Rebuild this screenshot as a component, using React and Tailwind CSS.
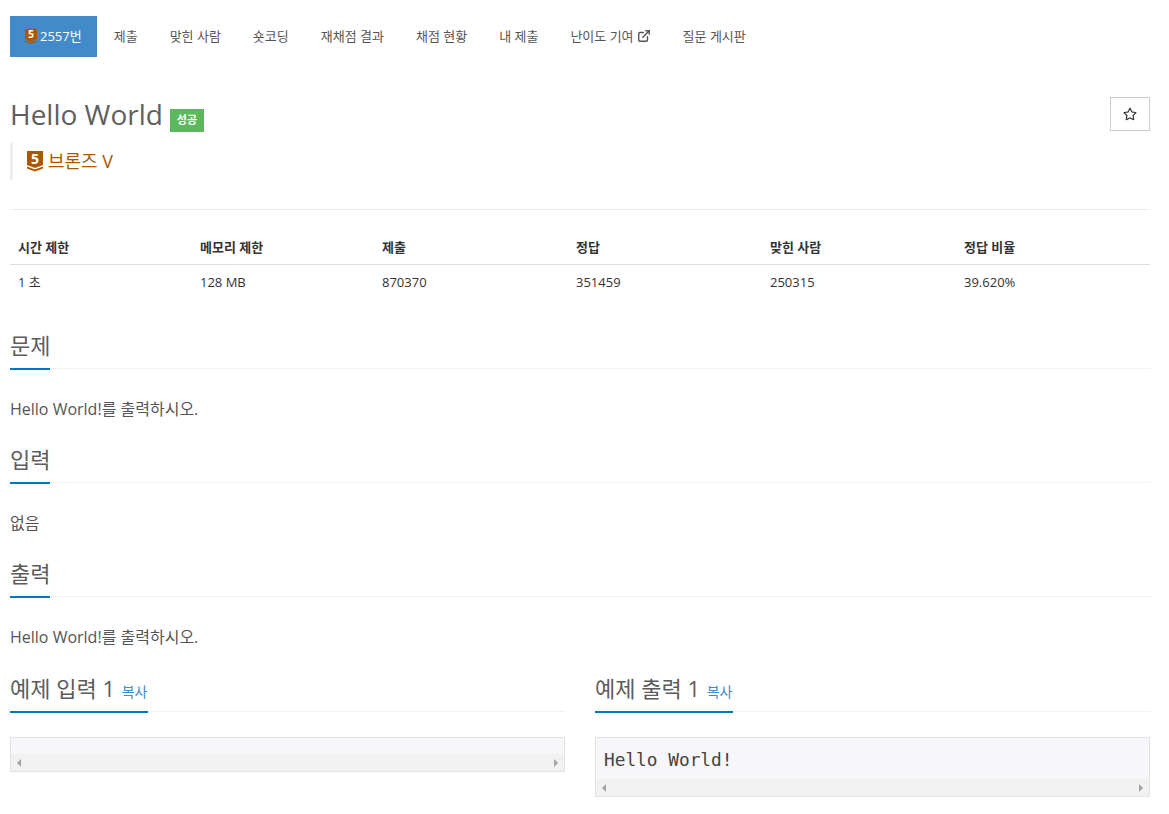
import React from 'react';
import { FaRegStar } from 'react-icons/fa';
import { ExternalLink } from 'lucide-react';

const navItems = ['제출', '맞힌 사람', '숏코딩', '재채점 결과', '채점 현황', '내 제출'];
const stats = [
  ['시간 제한', '1 초'],
  ['메모리 제한', '128 MB'],
  ['제출', '870370'],
  ['정답', '351459'],
  ['맞힌 사람', '250315'],
  ['정답 비율', '39.620%'],
];

function TierIcon({ className }) {
  return (
    <svg viewBox="0 0 16 21" className={`overflow-visible ${className}`}>
      <path d="M0 0H16V14L8 17L0 14Z" fill="#ad5600" />
      <path d="M0 15.5L8 18.5L16 15.5V17.5L8 20.5L0 17.5Z" fill="#ad5600" />
      <text x="8" y="12.5" textAnchor="middle" fontSize="14" fontWeight="700" fill="#fff" fontFamily="'Open Sans', sans-serif">5</text>
    </svg>
  );
}

function Headline({ children, underline = 'w-10' }) {
  return (
    <div className="relative border-b border-dotted border-[#e5e5e5] h-[37px]">
      <h2 className="text-[22px] leading-[26px] text-[#5c5c5c]">{children}</h2>
      <div className={`absolute left-0 bottom-[-2px] h-[2px] bg-[#0076c0] ${underline}`}></div>
    </div>
  );
}

function Section({ title, children }) {
  return (
    <section className="h-[114px]">
      <Headline>{title}</Headline>
      <p className="mt-[30px] text-[16px] leading-[20px] text-[#555]">{children}</p>
    </section>
  );
}

function ScrollBar() {
  return (
    <div className="flex h-[17px] items-center justify-between bg-[#f1f1f1] px-[6px]">
      <span className="h-0 w-0 border-y-[4px] border-r-[4px] border-y-transparent border-r-[#a3a3a3]"></span>
      <span className="h-0 w-0 border-y-[4px] border-l-[4px] border-y-transparent border-l-[#a3a3a3]"></span>
    </div>
  );
}

function Sample({ title, text }) {
  return (
    <div>
      <Headline underline="w-[138px]">
        {title} <a className="text-[14px] text-[#428bca] ml-[1px]">복사</a>
      </Headline>
      <div className="mt-[25px] border border-[#e1e1e8] bg-[#f7f7f9]">
        {text ? (
          <pre className="h-[41px] px-[8px] pt-[10px] text-[17.8px] leading-[24px] text-[#444] font-['DejaVu_Sans_Mono',monospace]">{text}</pre>
        ) : (
          <div className="h-[16px]"></div>
        )}
        <ScrollBar />
      </div>
    </div>
  );
}

export default function App() {
  return (
    <div className="pl-[10px] pr-[19px] pt-[16px] font-['Open_Sans','Noto_Sans_CJK_KR',sans-serif] text-[#333] bg-white min-h-[814px]">
      <ul className="flex text-[13px] text-[#555] h-[41px]">
        <li className="flex items-center gap-[3px] bg-[#428bca] text-white px-[15px] mr-[1px]">
          <TierIcon className="h-[17px] w-[12px]" />
          <span>2557번</span>
        </li>
        {navItems.map((item) => (
          <li key={item} className="flex items-center px-[16px]">{item}</li>
        ))}
        <li className="flex items-center gap-[3px] px-[16px]">
          난이도 기여
          <ExternalLink className="h-[14px] w-[14px] mb-[2px]" strokeWidth={2.4} />
        </li>
        <li className="flex items-center px-[16px]">질문 게시판</li>
      </ul>

      <div className="mt-[40px] flex justify-between">
        <div className="flex items-center h-[38px]">
          <h1 className="text-[28px] leading-[38px] text-[#5f5f5f] mt-[-4px]">Hello World</h1>
          <span className="ml-[7px] mt-[9px] flex h-[23px] w-[34px] items-center justify-center bg-[#5cb85c] text-[11px] font-bold text-white">성공</span>
        </div>
        <button className="flex h-[34px] w-[40px] items-center justify-center border border-[#ccc] text-[#333] pr-[1px]">
          <FaRegStar className="h-[14px] w-[14px]" />
        </button>
      </div>

      <div className="mt-[7px] flex h-[38px] items-center gap-[5px] border-l-[3px] border-[#eee] pl-[14px] text-[18px] text-[#ad5600]">
        <TierIcon className="h-[21px] w-[16px]" />
        <span>브론즈 V</span>
      </div>

      <hr className="mt-[29px] border-[#eee]" />

      <table className="mt-[20px] w-full table-fixed text-[13px]">
        <thead>
          <tr className="border-b border-[#ddd] h-[34px]">
            {stats.map(([label], i) => (
              <th key={label} className={`px-[8px] pt-[1px] text-left font-bold ${i < 2 ? 'w-[182px]' : 'w-[194px]'}`}>{label}</th>
            ))}
          </tr>
        </thead>
        <tbody>
          <tr className="h-[36px]">
            {stats.map(([label, value]) => (
              <td key={label} className="px-[8px]">{value}</td>
            ))}
          </tr>
        </tbody>
      </table>

      <div className="mt-[32px]">
        <Section title="문제">Hello World!를 출력하시오.</Section>
        <Section title="입력">없음</Section>
        <Section title="출력">Hello World!를 출력하시오.</Section>
      </div>

      <div className="mt-[1px] grid grid-cols-2 gap-[30px]">
        <Sample title="예제 입력 1" />
        <Sample title="예제 출력 1" text="Hello World!" />
      </div>
    </div>
  );
}
